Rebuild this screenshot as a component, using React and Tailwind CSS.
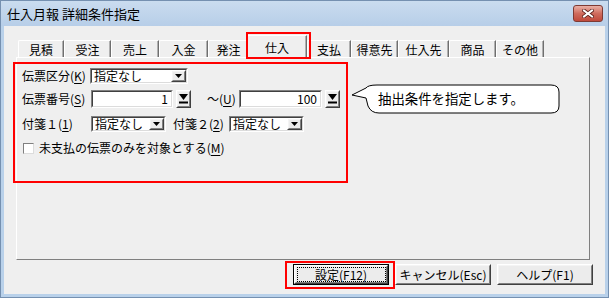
import React from 'react';

const tabs = [
  { label: '見積', w: 'w-[46px]' },
  { label: '受注', w: 'w-[47px]' },
  { label: '売上', w: 'w-[48px]' },
  { label: '入金', w: 'w-[49px]' },
  { label: '発注', w: 'w-[41px]' },
  { label: '仕入', w: 'w-[60px]', active: true },
  { label: '支払', w: 'w-[44px]' },
  { label: '得意先', w: 'w-[47px]' },
  { label: '仕入先', w: 'w-[51px]' },
  { label: '商品', w: 'w-[47px]' },
  { label: 'その他', w: 'w-[48px]' },
];

function Sunken({ className, children }) {
  return (
    <div className={`border border-t-[#808080] border-l-[#808080] border-b-white border-r-white ${className}`}>
      <div className="h-full w-full border border-t-[#404040] border-l-[#404040] border-b-[#dcdcdc] border-r-[#dcdcdc] bg-white flex items-center">
        {children}
      </div>
    </div>
  );
}

function Raised({ className, children }) {
  return (
    <div className={`border border-t-white border-l-white border-b-[#404040] border-r-[#404040] bg-[#ececec] ${className}`}>
      <div className="h-full w-full border border-t-[#f4f4f4] border-l-[#f4f4f4] border-b-[#808080] border-r-[#808080] flex items-center justify-center">
        {children}
      </div>
    </div>
  );
}

function Combo({ className }) {
  return (
    <Sunken className={className}>
      <span className="flex-1 pl-[2px] leading-none">指定なし</span>
      <Raised className="w-[15px] h-full">
        <svg width="7" height="4" viewBox="0 0 7 4"><path d="M0 0 H7 L3.5 4 Z" fill="#000" /></svg>
      </Raised>
    </Sunken>
  );
}

function PickButton() {
  return (
    <Raised className="w-[15px] h-[18px] ml-[3px]">
      <svg width="9" height="10" viewBox="0 0 9 10">
        <path d="M0 0 H9 L4.5 6 Z" fill="#000" />
        <rect x="0" y="7.5" width="9" height="2" fill="#000" />
      </svg>
    </Raised>
  );
}

function Key({ children }) {
  return <span className="underline underline-offset-2">{children}</span>;
}

function WinButton({ children, isDefault }) {
  return (
    <div className={`w-[96px] h-[21px] ${isDefault ? 'border border-black' : ''}`}>
      <Raised className="w-full h-full">
        {isDefault ? (
          <div className="w-[89px] h-[15px] border border-dotted border-black flex items-center justify-center">{children}</div>
        ) : (
          children
        )}
      </Raised>
    </div>
  );
}

export default function App() {
  return (
    <div className="w-[609px] h-[298px] bg-[#b9d1ea] border border-[#7590b0] flex flex-col font-['Noto_Sans_CJK_JP',sans-serif] text-[12px] text-black leading-none">
      {/* Title bar */}
      <div className="h-[25px] flex items-center justify-between pl-[6px] pr-[5px] bg-gradient-to-b from-[#cadcef] to-[#b7cee8]">
        <span className="text-[13px]">仕入月報 詳細条件指定</span>
        <div className="w-[30px] h-[17px] rounded-[3px] border border-[#7e3a33] bg-gradient-to-b from-[#e9b0a6] via-[#cf6b5d] to-[#c0493b] flex items-center justify-center">
          <svg width="12" height="9" viewBox="0 0 12 9">
            <path d="M2 1.5 L10 7.5 M10 1.5 L2 7.5" stroke="#5a1f1a" strokeWidth="3.6" strokeLinecap="square" />
            <path d="M2 1.5 L10 7.5 M10 1.5 L2 7.5" stroke="#fff" strokeWidth="2" strokeLinecap="square" />
          </svg>
        </div>
      </div>

      {/* Client area */}
      <div className="flex-1 mx-[3px] mb-[3px] bg-[#efefef] flex flex-col">
        {/* Tabs */}
        <div className="mt-[9px] ml-[14px] h-[22px] flex items-end relative z-10">
          {tabs.map((t) =>
            t.active ? (
              <div key={t.label} className={`${t.w} h-[23px] -ml-[2px] relative top-[1px] bg-[#efefef] border-t border-l border-t-white border-l-white border-r border-r-[#6f6f6f] shadow-[inset_-1px_0_0_#b0b0b0] rounded-tl-[2px] flex justify-center pt-[6px]`}>
                {t.label}
                <div className="absolute -left-[2px] -top-[4px] w-[65px] h-[27px] border-2 border-[#ff0000]" />
              </div>
            ) : (
              <div key={t.label} className={`${t.w} h-[17px] border-t border-l border-t-white border-l-white border-r border-r-[#6f6f6f] shadow-[inset_-1px_0_0_#b0b0b0] rounded-tl-[2px] flex items-center justify-center pt-[1px]`}>
                {t.label}
              </div>
            )
          )}
        </div>

        {/* Panel */}
        <div className="ml-[12px] w-[574px] h-[203px] border border-t-white border-l-white border-r-[#7f7f7f] border-b-[#7f7f7f] relative">
          <div className="-ml-[4px] mt-[4px] w-[335px] h-[121px] border-2 border-[#ff0000] pl-[7px] pt-[4px] flex flex-col">
            <div className="h-[16px] flex items-center">
              <span className="w-[68px]">伝票区分(<Key>K</Key>)</span>
              <Combo className="w-[98px] h-[16px]" />
            </div>
            <div className="h-[18px] mt-[6px] flex items-center">
              <span className="w-[69px]">伝票番号(<Key>S</Key>)</span>
              <Sunken className="w-[82px] h-[18px]">
                <span className="flex-1 text-right pr-[3px]">1</span>
              </Sunken>
              <PickButton />
              <span className="ml-[16px] w-[32px]">〜(<Key>U</Key>)</span>
              <Sunken className="w-[83px] h-[18px]">
                <span className="flex-1 text-right pr-[3px]">100</span>
              </Sunken>
              <PickButton />
            </div>
            <div className="h-[16px] mt-[8px] flex items-center">
              <span className="w-[69px]">付箋１(<Key>1</Key>)</span>
              <Combo className="w-[75px] h-[16px]" />
              <span className="ml-[7px] w-[56px]">付箋２(<Key>2</Key>)</span>
              <Combo className="w-[75px] h-[16px]" />
            </div>
            <div className="h-[12px] mt-[10px] flex items-center">
              <div className="ml-[1px] w-[11px] h-[11px] border border-t-[#808080] border-l-[#808080] border-b-[#dcdcdc] border-r-[#dcdcdc] bg-white" />
              <span className="ml-[5px]">未支払の伝票のみを対象とする(<Key>M</Key>)</span>
            </div>
          </div>

          {/* Callout */}
          <div className="absolute left-[334px] top-[26px] w-[210px] h-[30px]">
            <svg width="210" height="30" viewBox="0 0 210 30" className="absolute inset-0">
              <path d="M1 11 L15 4 Q17 1 26 1 H200 Q208 1 208 8 V22 Q208 29 200 29 H28 Q20 29 17 22 L15 14 Z" fill="#fff" stroke="#000" strokeWidth="1" />
            </svg>
            <span className="absolute left-[27px] top-[8px] text-[13.4px]">抽出条件を指定します。</span>
          </div>
        </div>

        {/* Buttons */}
        <div className="mt-[4px] pr-[12px] flex justify-end gap-[6px]">
          <div className="relative">
            <WinButton isDefault>設定(F12)</WinButton>
            <div className="absolute -left-[8px] -top-[3px] w-[110px] h-[28px] border-2 border-[#ff0000]" />
          </div>
          <WinButton>キャンセル(Esc)</WinButton>
          <WinButton>ヘルプ(F1)</WinButton>
        </div>
      </div>
    </div>
  );
}
